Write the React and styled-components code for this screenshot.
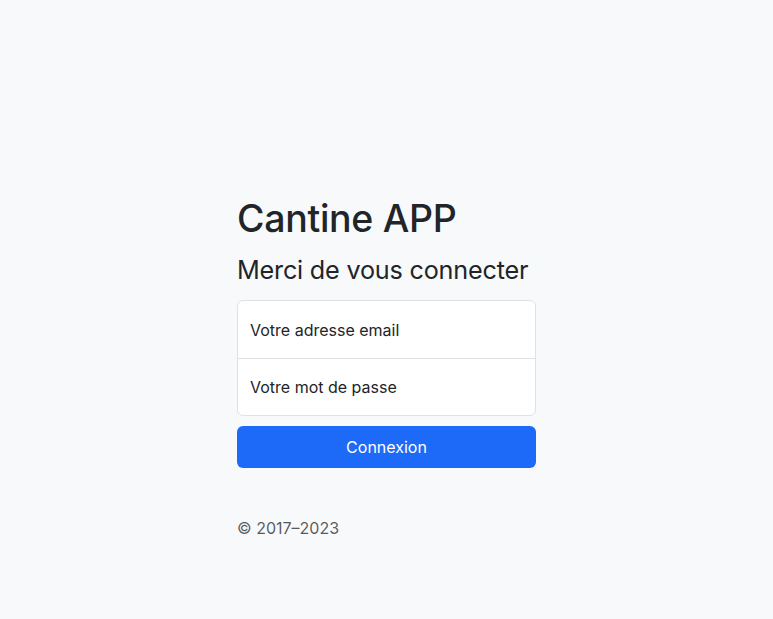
import React from "react";
import styled, { createGlobalStyle } from "styled-components";

const Global = createGlobalStyle`
  html, body { margin: 0; padding: 0; height: 100%; }
  body {
    background: #f8f9fa;
    color: #212529;
    font-family: Inter, "Noto Sans", sans-serif;
    -webkit-font-smoothing: antialiased;
  }
  * { box-sizing: border-box; }
`;

const Page = styled.div`
  min-height: 619px;
  display: flex;
  justify-content: center;
  padding-top: 196px;
`;

const Main = styled.main`
  width: 299px;
  display: flex;
  flex-direction: column;
`;

const Title = styled.h1`
  margin: 0 0 14px;
  font-size: 37.5px;
  line-height: 45px;
  font-weight: 500;
  letter-spacing: -0.3px;
`;

const Subtitle = styled.h3`
  margin: 0 0 15px;
  font-size: 25.2px;
  line-height: 30px;
  font-weight: 400;
  letter-spacing: -0.2px;
`;

const Fields = styled.div`
  display: flex;
  flex-direction: column;
  background: #fff;
  border: 1px solid #dee2e6;
  border-radius: 6px;
  margin-bottom: 10px;
`;

const Field = styled.input`
  height: 57px;
  border: none;
  border-top: ${(p) => (p.$first ? "none" : "1px solid #dee2e6")};
  background: transparent;
  padding: 0 12px;
  font-family: inherit;
  font-size: 16px;
  color: #212529;
  outline: none;
  &::placeholder { color: #212529; opacity: 1; }
`;

const Button = styled.button`
  height: 42px;
  border: none;
  border-radius: 6px;
  background: #1d6af9;
  color: #fff;
  font-family: inherit;
  font-size: 16px;
  cursor: pointer;
`;

const Copy = styled.p`
  margin: 48px 0 16px;
  font-size: 16px;
  line-height: 24px;
  color: rgba(33, 37, 41, 0.75);
`;

export default function App() {
  return (
    <>
      <Global />
      <Page>
        <Main>
          <Title>Cantine APP</Title>
          <Subtitle>Merci de vous connecter</Subtitle>
          <Fields>
            <Field $first type="email" placeholder="Votre adresse email" />
            <Field type="password" placeholder="Votre mot de passe" />
          </Fields>
          <Button>Connexion</Button>
          <Copy>© 2017–2023</Copy>
        </Main>
      </Page>
    </>
  );
}
